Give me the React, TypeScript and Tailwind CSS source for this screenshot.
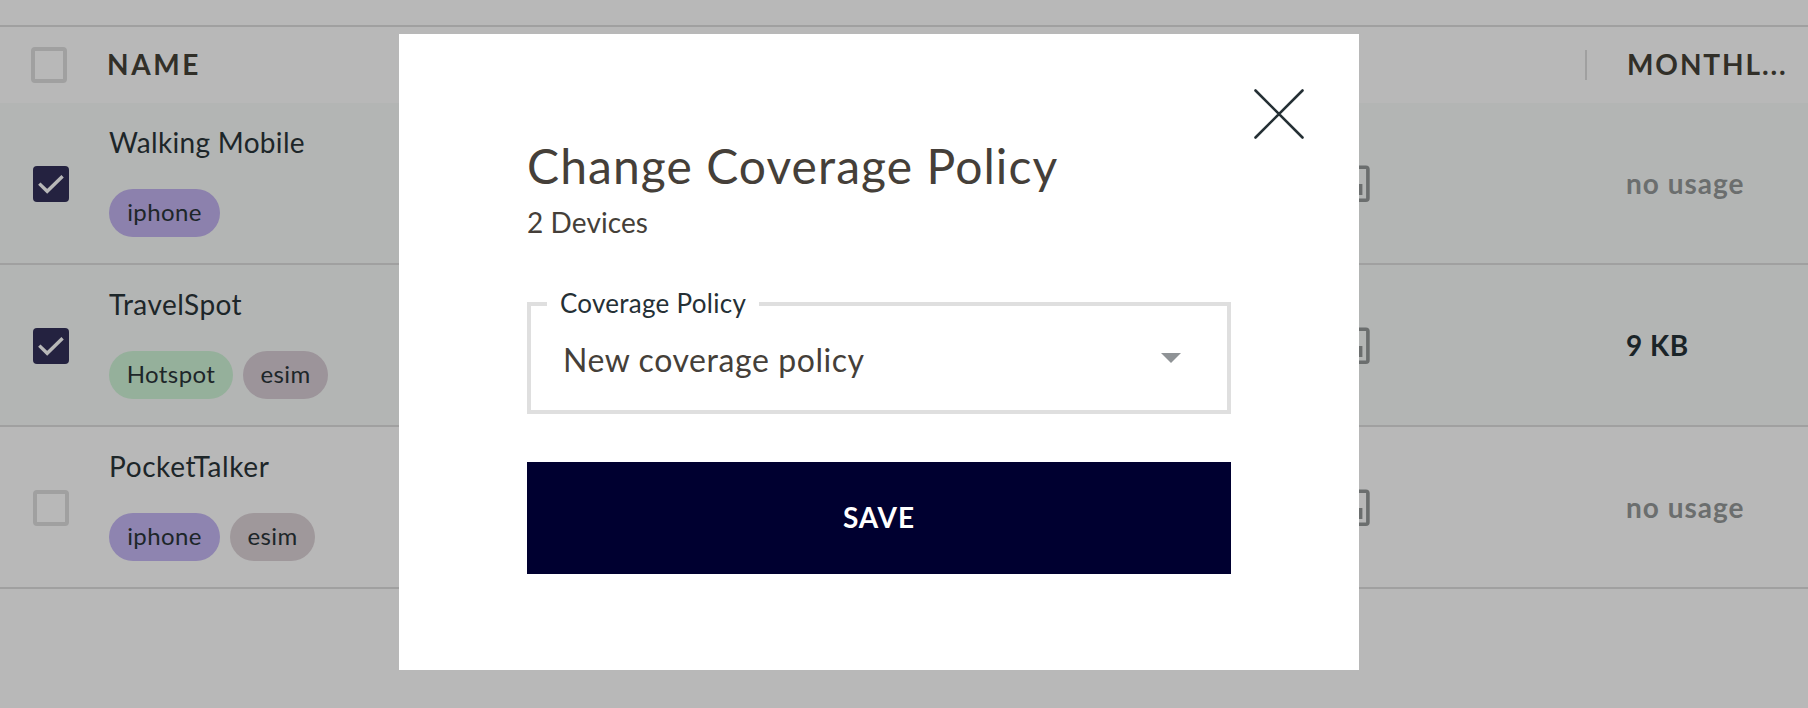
type Tag = { label: string; className: string };
type Device = {
  name: string;
  nameClass: string;
  selected: boolean;
  tags: Tag[];
  usage: string;
  active: boolean;
};

const devices: Device[] = [
  {
    name: "Walking Mobile",
    nameClass: "tracking-[0.32px]",
    selected: true,
    tags: [{ label: "iphone", className: "w-[111px] bg-[#8c81ad]" }],
    usage: "no usage",
    active: false,
  },
  {
    name: "TravelSpot",
    nameClass: "tracking-[0.45px]",
    selected: true,
    tags: [
      { label: "Hotspot", className: "w-[124px] bg-[#95b09b]" },
      { label: "esim", className: "w-[85px] bg-[#9c949a]" },
    ],
    usage: "9 KB",
    active: true,
  },
  {
    name: "PocketTalker",
    nameClass: "tracking-[0.6px]",
    selected: false,
    tags: [
      { label: "iphone", className: "w-[111px] bg-[#8e84b0]" },
      { label: "esim", className: "w-[85px] bg-[#9f989b]" },
    ],
    usage: "no usage",
    active: false,
  },
];

function Checkbox({ checked = false }: { checked?: boolean }) {
  if (!checked) {
    return <span className="block size-9 shrink-0 rounded border-4 border-[#a0a0a0]" />;
  }
  return (
    <span className="block size-9 shrink-0 rounded bg-[#242240]">
      <svg viewBox="0 0 36 36" className="size-9" fill="none" stroke="#b8b8b8" strokeWidth="3.4">
        <path d="M6.3 17.6 14.2 25.3 29.6 10.3" />
      </svg>
    </span>
  );
}

function SimIcon() {
  return (
    <svg viewBox="0 0 30 38" className="h-[38px] w-[30px]" fill="none" stroke="#6b6e6e" strokeWidth="3.6">
      <rect x="1.9" y="2.2" width="26" height="33" rx="2" />
      <path d="M8 19v11M14 19v11M20.6 19v11" />
    </svg>
  );
}

function DeviceRow({ device }: { device: Device }) {
  return (
    <div
      className={`flex h-[162px] items-start border-b-2 border-[#a0a0a0] pl-[33px] ${
        device.selected ? "bg-[#b3b5b4]" : "bg-[#b8b8b8]"
      }`}
    >
      <div className="pt-[63px]">
        <Checkbox checked={device.selected} />
      </div>
      <div className="ml-10 pt-[23px]">
        <div className={`text-[28px] leading-8 text-[#1d2629] ${device.nameClass}`}>{device.name}</div>
        <div className="mt-[31px] flex gap-2.5">
          {device.tags.map((tag) => (
            <span
              key={tag.label}
              className={`flex h-12 items-center justify-center rounded-full pb-0.5 text-2xl tracking-[0.4px] text-[#1d2629] ${tag.className}`}
            >
              {tag.label}
            </span>
          ))}
        </div>
      </div>
      <div className="ml-auto pt-[62px]">
        <SimIcon />
      </div>
      <div
        className={`ml-64 flex h-full w-[182px] items-center text-[28px] font-bold ${
          device.active ? "tracking-[0.5px] text-[#1a2428]" : "tracking-[1px] text-[#6b6e6e]"
        }`}
      >
        {device.usage}
      </div>
    </div>
  );
}

function CoverageDialog() {
  return (
    <div
      role="dialog"
      className="absolute top-[34px] left-[399px] h-[636px] w-[960px] bg-white px-32 pt-[103px] text-[#453f39]"
    >
      <button aria-label="Close" className="absolute top-[55px] right-[55px]">
        <svg viewBox="0 0 50 50" className="size-[50px]" stroke="#253035" strokeWidth="2.6" strokeLinecap="round">
          <path d="M1.5 1.5 48.5 48.5M48.5 1.5 1.5 48.5" />
        </svg>
      </button>
      <h1 className="text-[48px] leading-[57px] tracking-[1.07px]">Change Coverage Policy</h1>
      <p className="mt-3 text-[28px] leading-8 tracking-[0.1px]">2 Devices</p>
      <div className="relative mt-16 flex h-28 items-center justify-between border-4 border-[#dfdfdf] pr-[46px] pl-8">
        <span className="absolute -top-[19px] left-4 w-[212px] bg-white text-center text-[26px] leading-8 tracking-[0.28px] whitespace-nowrap text-[#253035]">
          Coverage Policy
        </span>
        <span className="pt-1 text-[32px] tracking-[0.57px]">New coverage policy</span>
        <svg viewBox="0 0 20 10" className="h-2.5 w-5" fill="#8f9396">
          <path d="M0 0h20L10 10z" />
        </svg>
      </div>
      <button className="mt-12 flex h-28 w-full items-center justify-center bg-[#000030] pb-0.5 text-[28px] font-bold tracking-[0.95px] text-white">
        SAVE
      </button>
    </div>
  );
}

export default function App() {
  return (
    <div className="relative h-[708px] w-[1808px] overflow-hidden bg-[#b8b8b8] font-['Lato','Open_Sans',sans-serif]">
      <div className="h-[25px]" />
      <div className="flex h-[78px] items-center border-t-2 border-[#a0a0a0] pl-[31px] text-[28px] font-bold text-[#312f28]">
        <Checkbox />
        <span className="ml-10 pb-0.5 tracking-[2.6px]">NAME</span>
        <span className="ml-auto h-[30px] w-0.5 bg-[#a0a0a0]" />
        <span className="ml-10 w-[181px] pb-0.5 tracking-[1.9px]">MONTHL...</span>
      </div>
      {devices.map((device) => (
        <DeviceRow key={device.name} device={device} />
      ))}
      <CoverageDialog />
    </div>
  );
}
